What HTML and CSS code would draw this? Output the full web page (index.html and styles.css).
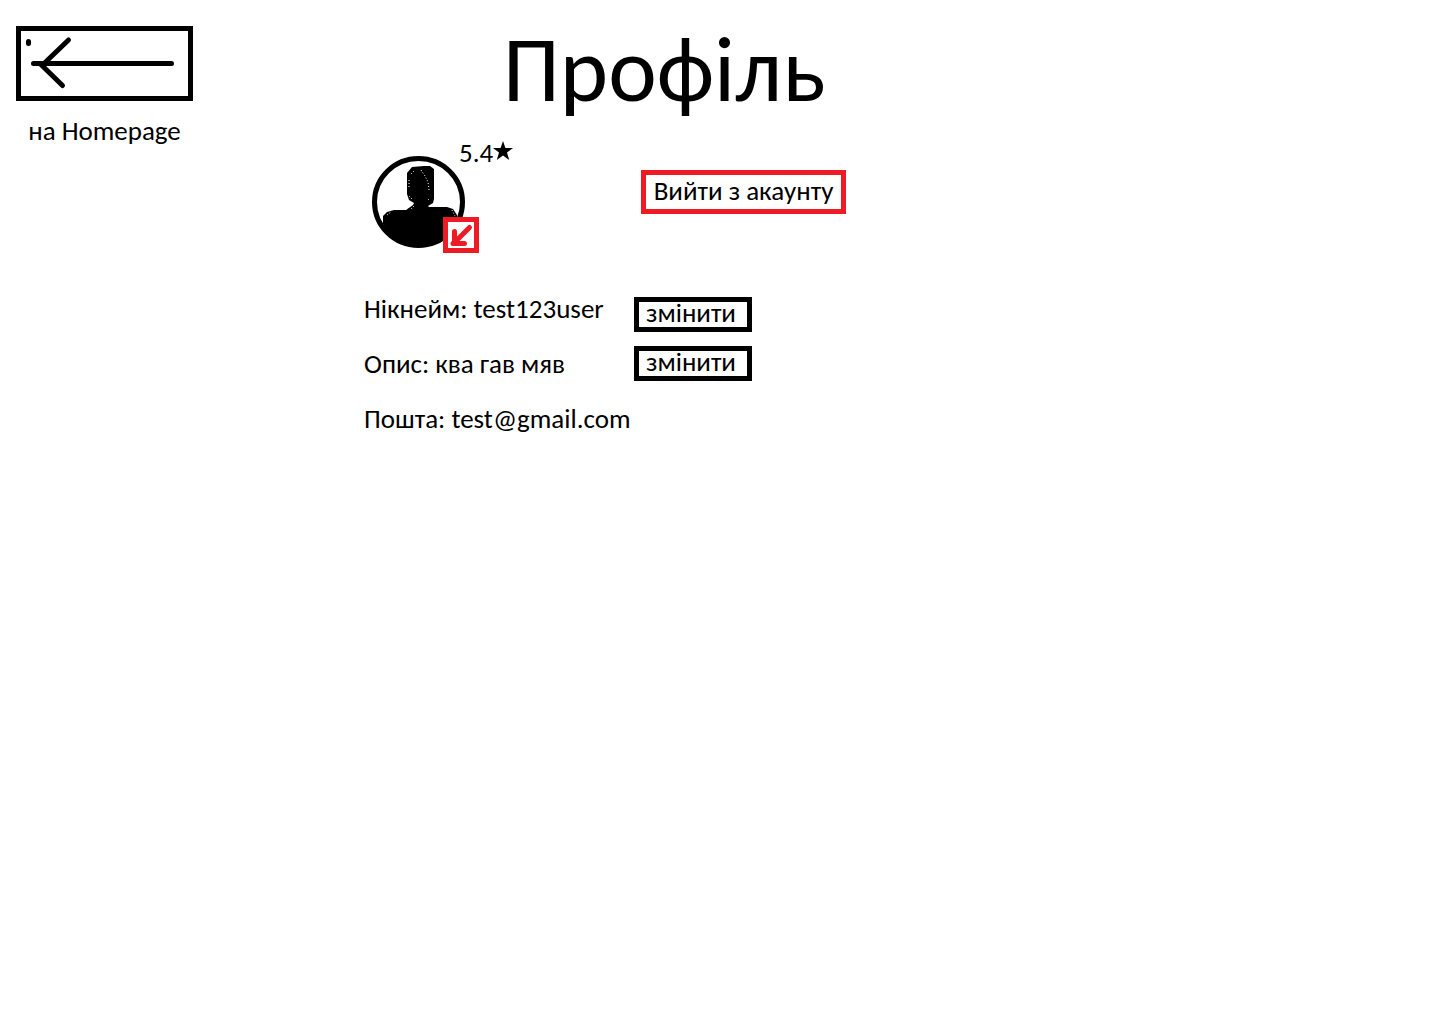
FILE: index.html
```html
<!DOCTYPE html>
<html lang="uk">
<head>
<meta charset="utf-8">
<meta name="viewport" content="width=device-width, initial-scale=1">
<title>Профіль</title>
<link rel="stylesheet" href="styles.css">
</head>
<body>
<div class="page">
  <nav class="side">
    <a class="back" href="#">
      <svg class="back-icon" viewBox="0 0 177 75" aria-hidden="true">
        <rect x="2.5" y="2.5" width="172" height="70" fill="none" stroke="#000" stroke-width="5"/>
        <path d="M17.500 37.500H155.500M52.500 14L26 39.500L46.500 59.500M12.500 15.500V17.500" fill="none" stroke="#000" stroke-width="5" stroke-linecap="round"/>
      </svg>
      <span>на Homepage</span>
    </a>
  </nav>
  <main class="profile">
    <h1 class="title">Профіль</h1>
    <section class="summary">
      <div class="avatar">
        <svg class="avatar-icon" viewBox="0 0 93 92" aria-hidden="true">
          <ellipse cx="46.500" cy="46" rx="44" ry="43.500" fill="none" stroke="#000" stroke-width="5"/>
          <path d="M40 11L52 10L58 10L62 13V43L61 47L56 50L57 51H75L81 53L85 59L86 66Q72 91 46 91Q24 90 11 68V60L15 56L22 54H34L41 49L42 47L37 44L35 38V17Z"/>
          <path d="M49 14L53 20L56 26L57 34M39 18L43 14M37 24V33M37 40L40 43M39 53L42 50M57 43L55 45M15 59L19 56M80 54L83 60" fill="none" stroke="#fff" stroke-width="1" stroke-dasharray="1 2"/>
        </svg>
        <button class="avatar-edit" type="button" aria-label="Змінити фото">
          <svg class="edit-icon" viewBox="0 0 26 26" aria-hidden="true">
            <path d="M21.500 5.500L7 20M6.500 9.500V21.500M5 21.500H16.500" fill="none" stroke="#ed1c24" stroke-width="5" stroke-linecap="round"/>
          </svg>
        </button>
      </div>
      <p class="rating">5.4<svg class="star" viewBox="0 0 20 20" aria-hidden="true"><path d="M10 0L12.400 7H20L14 11.600L16.200 19L10 14.600L3.800 19L6 11.600L0 7H7.600Z"/></svg></p>
      <button class="logout" type="button">Вийти з акаунту</button>
    </section>
    <section class="details">
      <p>Нікнейм: test123user</p>
      <button class="change first" type="button">змінити</button>
      <p>Опис: ква гав мяв</p>
      <button class="change" type="button">змінити</button>
      <p>Пошта: test@gmail.com</p>
    </section>
  </main>
</div>
</body>
</html>
```
FILE: styles.css
```css
* { box-sizing: border-box; }

body {
  margin: 0;
  background: #fff;
  color: #000;
  font: 27px/30px Carlito, Calibri, Lato, "Noto Sans", sans-serif;
}

p, h1 { margin: 0; }

button {
  padding: 0;
  background: #fff;
  color: inherit;
  font: inherit;
  cursor: pointer;
}

.page {
  display: grid;
  grid-template-columns: 177px minmax(0, 600px);
  column-gap: 171px;
  padding: 26px 16px;
}

.back {
  display: flex;
  flex-direction: column;
  gap: 15px;
  color: inherit;
  text-align: center;
  text-decoration: none;
}

.back-icon { display: block; width: 100%; }

.title {
  font-size: 92px;
  font-weight: 400;
  line-height: 88px;
  text-align: center;
}

.summary {
  display: grid;
  grid-template-columns: 87px 182px auto;
  justify-content: start;
  align-items: start;
  padding: 24px 0 0 8px;
}

.avatar {
  position: relative;
  width: 93px;
  margin-top: 18px;
}

.avatar-icon { display: block; width: 93px; height: 92px; }

.avatar-edit {
  position: absolute;
  right: -14px;
  bottom: -5px;
  width: 36px;
  height: 36px;
  border: 5px solid #ed1c24;
}

.edit-icon { display: block; width: 26px; height: 26px; }

.rating { display: flex; }

.star { width: 20px; height: 20px; margin-top: 3px; }

.logout {
  width: 205px;
  height: 44px;
  margin-top: 32px;
  padding-bottom: 2px;
  border: 5px solid #ed1c24;
}

.details {
  display: grid;
  grid-template-columns: 270px 118px;
  grid-template-rows: 38px 35px 48px;
  row-gap: 14px;
  align-items: center;
  padding-top: 46px;
}

.details p { white-space: nowrap; }

.details p:first-child { align-self: start; }

.change {
  height: 35px;
  padding: 0 4px 4px 0;
  border: 5px solid #000;
  line-height: 21px;
}

.first { align-self: end; }
```
